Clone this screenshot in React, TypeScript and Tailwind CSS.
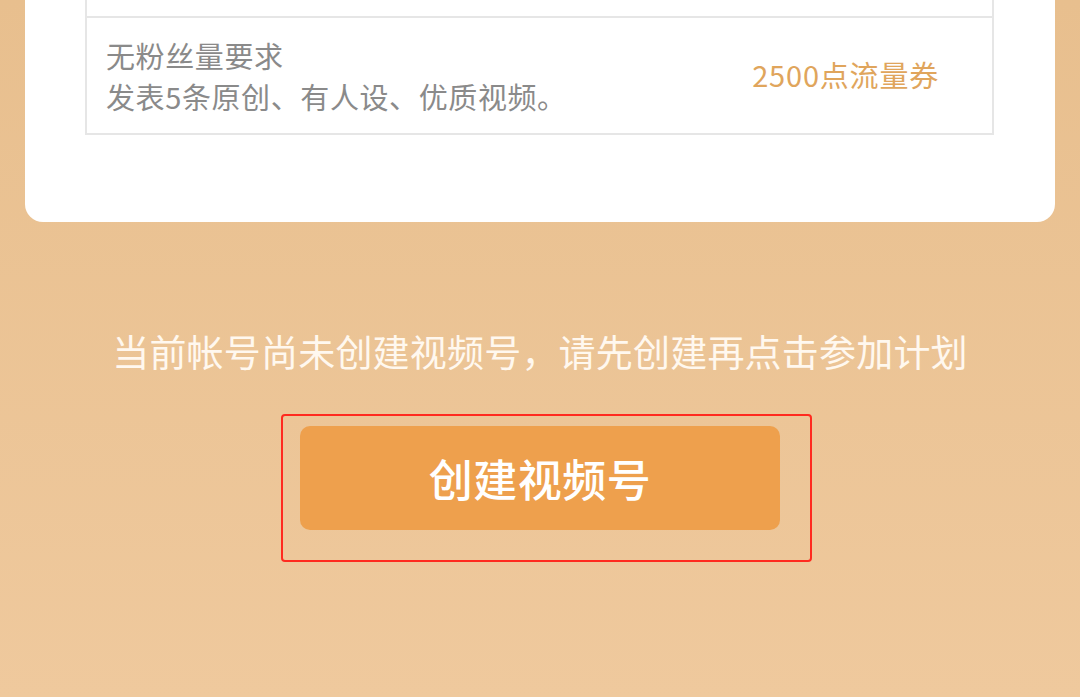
export default function App() {
  const font = { fontFamily: '"Noto Sans CJK SC", "Noto Sans", sans-serif' };

  return (
    <div
      className="w-[1080px] h-[697px] overflow-hidden bg-gradient-to-b from-[#e8bf8e] to-[#efc99d]"
      style={font}
    >
      {/* 白色卡片（上半部分被裁掉） */}
      <div className="mx-[25px] h-[222px] bg-white rounded-b-[18px]">
        <div className="ml-[60px] mr-[61px] border-x-2 border-[#e6e6e6]">
          <div className="h-[16px]" />
          <div className="h-[119px] border-y-2 border-[#e6e6e6] flex items-center justify-between pl-[19px] pr-[53px]">
            <div className="text-[29px] leading-[41px] tracking-[0.6px] text-[#8a8a8a]">
              <div>无粉丝量要求</div>
              <div>发表5条原创、有人设、优质视频。</div>
            </div>
            <div className="text-[29px] tracking-[0.8px] text-[#e0a55c] -mt-[2px]">2500点流量券</div>
          </div>
        </div>
      </div>

      <div className="mt-[104px] h-[50px] text-center text-[37px] leading-[50px] tracking-[0.2px] text-[#fff8ef]">
        当前帐号尚未创建视频号，请先创建再点击参加计划
      </div>

      <div className="mt-[38px] pl-[281px]">
        <div className="w-[531px] h-[148px] border-2 border-[#ff2a1f] rounded-[4px] pl-[17px] pt-[10px]">
          <button className="w-[480px] h-[104px] rounded-[10px] bg-[#eea04d] text-white text-[44px] font-medium tracking-[0.5px] flex items-center justify-center">
            创建视频号
          </button>
        </div>
      </div>
    </div>
  );
}
